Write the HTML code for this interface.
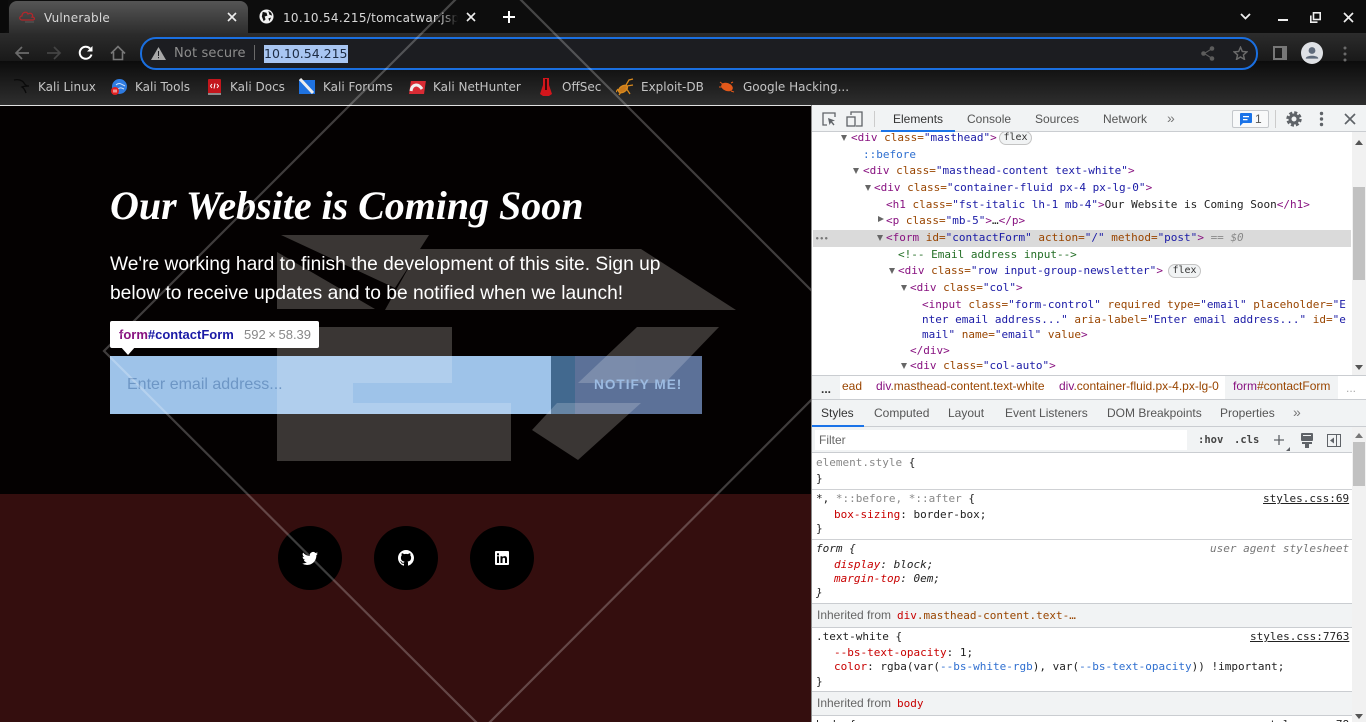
<!DOCTYPE html>
<html><head><meta charset="utf-8"><title>Vulnerable</title>
<style>
*{box-sizing:border-box}
html,body{margin:0;padding:0;width:1366px;height:722px;overflow:hidden;background:#000}
body{position:relative;font-family:"Liberation Sans",sans-serif}
.a{position:absolute;white-space:nowrap}
.c{font-family:"DejaVu Sans",sans-serif;font-size:12px;color:#c4c4c4;line-height:16px}
.m{position:absolute;white-space:pre;font-family:"DejaVu Sans Mono",monospace;font-size:11px;line-height:14px;color:#222;margin-top:1px}
.t{color:#881280}.n{color:#994500}.v{color:#1a1aa6}.g{color:#236e25}
.r{color:#c80000}.q{color:#888}.b{color:#2f6fd0}
.u{position:absolute;white-space:nowrap;font-size:12px;line-height:14px;color:#555}
.arr{position:absolute;width:0;height:0;border-left:3.5px solid transparent;border-right:3.5px solid transparent;border-top:6px solid #666}
.arrr{position:absolute;width:0;height:0;border-top:3.5px solid transparent;border-bottom:3.5px solid transparent;border-left:6px solid #666}
.hl{position:absolute;left:812px;width:540px;height:1px;background:#cfd1d4}
.bm{position:absolute;top:79px}
.soc{position:absolute;top:526px;width:64px;height:64px;border-radius:50%;background:#000}
</style></head><body>

<!-- page -->
<div class="a" style="left:0;top:106px;width:811px;height:388px;background:#040101"></div>
<div class="a" style="left:0;top:494px;width:811px;height:228px;background:#340e0e"></div>

<svg class="a" style="left:0;top:0" width="811" height="722" viewBox="0 0 811 722">
 <defs><clipPath id="f"><rect x="110" y="356" width="592" height="58"/></clipPath></defs>
 <g fill="#3a3634">
  <polygon points="281,235 429,235 395,288"/>
  <polygon points="277,252 375,309 277,309"/>
  <polygon points="419,249 641,249 736,310 385,310"/>
  <polygon points="277,327 452,327 452,383 353,383 353,403 511,403 511,461 277,461"/>
  <polygon points="637,327 719,327 665,383 578,383"/>
  <polygon points="557,403 641,403 578,460 532,430"/>
 </g>
 <rect x="110" y="356" width="441" height="58" fill="#9ec3e9"/>
 <rect x="551" y="356" width="24" height="58" fill="#42698f"/>
 <rect x="575" y="356" width="127" height="58" fill="#5c7198"/>
 <g fill="#fff" opacity=".19" clip-path="url(#f)">
  <polygon points="277,327 452,327 452,383 353,383 353,403 511,403 511,461 277,461"/>
  <polygon points="637,327 719,327 665,383 578,383"/>
  <polygon points="557,403 641,403 578,460 532,430"/>
 </g>
</svg>

<div class="a" style="left:110px;top:183px;font:italic bold 40px/46px 'Liberation Serif',serif;color:#fff;letter-spacing:-.03px">Our Website is Coming Soon</div>
<div class="a" style="left:110px;top:250px;font-size:19.2px;line-height:29px;color:#fff">We're working hard to finish the development of this site. Sign up<br>below to receive updates and to be notified when we launch!</div>

<div class="a" style="left:110px;top:321px;width:209px;height:27px;background:#fff;border-radius:2px"></div>
<div class="a" style="left:120px;top:346px;width:0;height:0;border-left:8px solid transparent;border-right:8px solid transparent;border-top:9px solid #fff"></div>
<div class="a" style="left:119px;top:327px;font-size:13px;line-height:15px;font-weight:bold"><span style="color:#881280">form</span><span style="color:#1a1aa6">#contactForm</span></div>
<div class="a" style="left:244px;top:327px;font-size:13px;line-height:15px;color:#888">592&#8201;×&#8201;58.39</div>

<div class="a" style="left:127px;top:375px;font-size:16px;line-height:19px;color:#6d96c5">Enter email address...</div>
<div class="a" style="left:594px;top:377px;font-size:13.6px;line-height:16px;font-weight:bold;letter-spacing:1px;color:#9cbbe2">NOTIFY ME!</div>

<div class="soc" style="left:278px"></div>
<div class="soc" style="left:374px"></div>
<div class="soc" style="left:470px"></div>

<!-- chrome -->
<div class="a" style="left:0;top:0;width:1366px;height:33px;background:#0d0d0d"></div>
<div class="a" style="left:0;top:33px;width:1366px;height:28px;background:linear-gradient(#2c2c2c,#191919)"></div>
<div class="a" style="left:0;top:61px;width:1366px;height:44px;background:linear-gradient(#0c0c0c,#2e2e2e)"></div>
<div class="a" style="left:0;top:105px;width:811px;height:1px;background:#e0e0e0"></div>
<div class="a" style="left:9px;top:1px;width:239px;height:33px;border-radius:8px 8px 0 0;background:linear-gradient(#555,#2c2c2c)"></div>
<div class="a" style="left:0;top:0;width:8px;height:33px;background:#0a0a0a;border-radius:0 0 6px 0"></div>

<svg class="a" style="left:17px;top:8px" width="22" height="18" viewBox="0 0 22 18" fill="none" stroke="#b3262b" stroke-width="1.2"><path d="M5 12C2 12 2 8 5 8 5 4 10 3 11 6 14 4 17 7 15 9 18 9 18 12 16 12Z"/><path d="M8 14h9" stroke="#555"/></svg>
<div class="a c" style="left:44px;top:10px;color:#d8d8d8;letter-spacing:.2px">Vulnerable</div>
<svg class="a" style="left:227px;top:12px" width="10" height="10" stroke="#eee" stroke-width="1.6"><path d="M1 1l8 8M9 1l-8 8"/></svg>
<svg class="a" style="left:259px;top:9px" width="15" height="15" viewBox="0 0 16 16"><circle cx="8" cy="8" r="7.5" fill="#f2f2f2"/><path d="M4 3l4 1 1 3-3 1 1 3-2 2-2-5zM10 2l3 2 1 3-3-1zM10 10l3-1-2 4z" fill="#111"/></svg>
<div class="a c" style="left:283px;top:10px;width:175px;overflow:hidden;color:#d8d8d8;letter-spacing:.3px;-webkit-mask-image:linear-gradient(90deg,#000 90%,transparent)">10.10.54.215/tomcatwar.jsp?page</div>
<svg class="a" style="left:466px;top:12px" width="10" height="10" stroke="#eee" stroke-width="1.6"><path d="M1 1l8 8M9 1l-8 8"/></svg>
<svg class="a" style="left:503px;top:11px" width="12" height="12" stroke="#fff" stroke-width="2"><path d="M6 0v12M0 6h12"/></svg>

<svg class="a" style="left:14px;top:45px" width="16" height="16" viewBox="0 0 16 16" fill="none" stroke="#6b6b6b" stroke-width="1.7"><path d="M15 8H2M8 2L2 8l6 6"/></svg>
<svg class="a" style="left:46px;top:45px" width="16" height="16" viewBox="0 0 16 16" fill="none" stroke="#444" stroke-width="1.7"><path d="M1 8h13M8 2l6 6-6 6"/></svg>
<svg class="a" style="left:78px;top:45px" width="16" height="16" viewBox="0 0 16 16" fill="none" stroke="#fff" stroke-width="2"><path d="M13.500 9.500A6 6 0 1 1 12 3.500"/><path d="M14.500 1v5.500H9" fill="#fff" stroke="none"/></svg>
<svg class="a" style="left:110px;top:45px" width="16" height="16" viewBox="0 0 16 16" fill="none" stroke="#777" stroke-width="1.600"><path d="M1 8.500L8 1.500l7 7M3.500 7v7.500h9V7"/></svg>

<div class="a" style="left:140px;top:37px;width:1118px;height:33px;border:2px solid #1a6fe0;border-radius:16px;background:#1c1d21"></div>
<svg class="a" style="left:151px;top:47px" width="15" height="13" viewBox="0 0 15 13"><path d="M7.500 0L15 13H0z" fill="#a8a8a8"/><path d="M7 4h1v5H7zM7 10h1v1.300H7z" fill="#1c1d21"/></svg>
<div class="a c" style="left:174px;top:46px;font-size:13px;color:#8d8d8d;letter-spacing:.15px">Not secure</div>
<div class="a" style="left:254px;top:45px;width:1px;height:15px;background:#6a6a6a"></div>
<div class="a c" style="left:264px;top:45px;height:18px;line-height:18px;font-size:12.500px;color:#1d2c44;background:#a9c6f2;width:84px">10.10.54.215</div>
<svg class="a" style="left:1201px;top:46px" width="14" height="15" viewBox="0 0 14 15" fill="#5c5c5c"><circle cx="11" cy="2.500" r="2.300"/><circle cx="11" cy="12.500" r="2.300"/><circle cx="2.500" cy="7.500" r="2.300"/><path d="M3 7l8-5 .5 1-8 5zM3 8l8 5 .5-1-8-5z"/></svg>
<svg class="a" style="left:1233px;top:46px" width="15" height="14" viewBox="0 0 24 23" fill="none" stroke="#6a6a6a" stroke-width="2.400"><path d="M12 2l3 7 7.500.7-5.700 5 1.700 7.300L12 18l-6.500 4 1.700-7.300-5.700-5L9 9z"/></svg>
<svg class="a" style="left:1273px;top:46px" width="14" height="14" fill="none"><rect x="1" y="1" width="12" height="12" stroke="#777" stroke-width="2"/><rect x="9" y="1" width="4" height="12" fill="#777"/></svg>
<div class="a" style="left:1301px;top:42px;width:22px;height:22px;border-radius:50%;background:#dfe1e5"></div>
<svg class="a" style="left:1301px;top:42px" width="22" height="22" viewBox="0 0 22 22" fill="#5f6a7a"><circle cx="11" cy="8.500" r="3.400"/><path d="M4.800 16c1-3 11.400-3 12.400 0v.6H4.800z"/></svg>
<svg class="a" style="left:1342px;top:46px" width="6" height="16" fill="#6b6b6b"><circle cx="3" cy="2" r="1.500"/><circle cx="3" cy="8" r="1.500"/><circle cx="3" cy="14" r="1.500"/></svg>

<svg class="a" style="left:1240px;top:13px" width="11" height="8" fill="none" stroke="#eee" stroke-width="1.800"><path d="M1 1l4.500 4.500L10 1"/></svg>
<div class="a" style="left:1278px;top:19px;width:10px;height:2px;background:#eee"></div>
<svg class="a" style="left:1310px;top:12px" width="11" height="11" fill="none" stroke="#eee" stroke-width="1.600"><rect x="3.500" y=".800" width="6.700" height="6.700"/><path d="M.800 3.500v6.700h6.700"/></svg>
<svg class="a" style="left:1343px;top:12px" width="11" height="11" stroke="#eee" stroke-width="1.700"><path d="M1 1l9 9M10 1l-9 9"/></svg>

<!-- bookmarks -->
<svg class="bm" style="left:13px;top:78px" width="18" height="17" viewBox="0 0 18 17" fill="none" stroke="#0a0a0a" stroke-width="1.300"><path d="M1 2c4-1 8 0 10 3 1 2 3 3 5 3-3 0-5 0-7 1 2 1 3 3 4 6"/></svg>
<div class="a c" style="left:38px;top:79px">Kali Linux</div>
<svg class="bm" style="left:111px" width="16" height="17" viewBox="0 0 16 17"><circle cx="8.500" cy="7.500" r="7.500" fill="#2e7be0"/><path d="M5 6c3-3 5-1 9 1M7 10c2-2 4-1 6 0" stroke="#cfe0f8" fill="none"/><circle cx="4" cy="12" r="4" fill="#e02020"/><rect x="2.500" y="10.500" width="1" height="3" fill="#fff"/><rect x="4.500" y="10.500" width="1" height="3" fill="#fff"/></svg>
<div class="a c" style="left:135px;top:79px">Kali Tools</div>
<svg class="bm" style="left:208px" width="13" height="16" viewBox="0 0 13 16"><rect width="13" height="15" rx="1" fill="#c3161c"/><rect y="14" width="13" height="2" fill="#8b8b8b"/><path d="M4 5L2.500 7 4 9M9 5l1.500 2L9 9M7 4.500L6 9.500" stroke="#fff" fill="none"/></svg>
<div class="a c" style="left:230px;top:79px">Kali Docs</div>
<svg class="bm" style="left:299px;top:78px" width="17" height="17" viewBox="0 0 17 17"><rect y="2" width="16" height="14" fill="#1f72e0"/><path d="M1 1l13 14" stroke="#eee" stroke-width="3"/></svg>
<div class="a c" style="left:323px;top:79px">Kali Forums</div>
<svg class="bm" style="left:409px;top:80px" width="17" height="15" viewBox="0 0 17 15"><rect x="2" y="1" width="15" height="13" fill="#d92b34" transform="skewX(-8)"/><path d="M2 11C3 4 9 3 13 9" stroke="#eee" stroke-width="3" fill="none"/></svg>
<div class="a c" style="left:433px;top:79px">Kali NetHunter</div>
<svg class="bm" style="left:538px;top:78px" width="16" height="18" viewBox="0 0 16 18"><path d="M5 0h6v7l3 9-3 2H5l-3-2 3-9z" fill="#d3161c"/><path d="M7 1h2v11H7z" fill="#3a0a0a"/></svg>
<div class="a c" style="left:562px;top:79px">OffSec</div>
<svg class="bm" style="left:616px;top:78px" width="18" height="18" viewBox="0 0 18 18" fill="none" stroke="#d98a1e" stroke-width="1.300"><ellipse cx="7" cy="11" rx="5" ry="3" fill="#c9791a" transform="rotate(-35 7 11)"/><path d="M10 7l3-5 4-1M11 8l6-1M10 10l4 6M5 14l-2 3M2 11L0 14"/></svg>
<div class="a c" style="left:641px;top:79px">Exploit-DB</div>
<svg class="bm" style="left:719px;top:80px" width="16" height="14" viewBox="0 0 16 14" fill="#e2581a"><ellipse cx="8" cy="7" rx="6" ry="4" transform="rotate(20 8 7)"/><path d="M1 2l4 3M0 7h3M12 11l3 1M12 3l2-1" stroke="#e2581a" fill="none"/></svg>
<div class="a c" style="left:743px;top:79px">Google Hacking...</div>

<!-- devtools -->
<div class="a" style="left:811px;top:105px;width:555px;height:617px;background:#fff;border-left:1px solid #8a8a8a"></div>

<!-- elements tree -->
<div class="a" style="left:813px;top:230px;width:538px;height:17px;background:#dadada"></div>
<div class="a" style="left:815px;top:233px;font:bold 7px/12px 'DejaVu Sans',sans-serif;color:#777">•••</div>
<div class="arr" style="left:841px;top:135px"></div>
<div class="m" style="left:851px;top:130px"><span class="t">&lt;div</span> <span class="n">class=</span><span class="v">"masthead"</span><span class="t">&gt;</span></div>
<div class="a" style="left:999px;top:131px;width:33px;height:14px;border:1px solid #c4c4c4;border-radius:8px;background:#f1f3f4;font:10px/12px 'DejaVu Sans Mono',monospace;color:#333;text-align:center">flex</div>
<div class="a" style="left:812px;top:105px;width:554px;height:27px;background:#f1f3f4;border-bottom:1px solid #cacdd1"></div>
<svg class="a" style="left:821px;top:111px" width="16" height="16" viewBox="0 0 16 16" fill="none" stroke="#5f6368" stroke-width="1.300"><path d="M6 14H2V2h12v4"/><path d="M7 7l7 2.500-3 1 2.500 3-1 1-2.500-3-1.500 2.500z" fill="#5f6368" stroke="none"/></svg>
<svg class="a" style="left:846px;top:111px" width="17" height="16" viewBox="0 0 17 16" fill="none" stroke="#5f6368" stroke-width="1.300"><path d="M5 4V1h11v14h-6"/><rect x="1" y="6" width="8" height="9"/></svg>
<div class="a" style="left:874px;top:111px;width:1px;height:16px;background:#ccc"></div>
<div class="a" style="left:881px;top:130px;width:74px;height:2px;background:#1a73e8"></div>
<div class="u" style="left:893px;top:112px;color:#333">Elements</div>
<div class="u" style="left:967px;top:112px">Console</div>
<div class="u" style="left:1035px;top:112px">Sources</div>
<div class="u" style="left:1103px;top:112px">Network</div>
<div class="u" style="left:1167px;top:111px;font-size:14px;color:#777">»</div>
<div class="a" style="left:1232px;top:110px;width:37px;height:18px;border:1px solid #c4c7cb;border-radius:2px;background:#f8f9fa"></div>
<svg class="a" style="left:1240px;top:113px" width="12" height="13" viewBox="0 0 12 13"><path d="M1 0h10a1 1 0 0 1 1 1v8a1 1 0 0 1-1 1H3l-3 3V1a1 1 0 0 1 1-1z" fill="#1a73e8"/><path d="M3 3h6v1.200H3zM3 6h4.500v1.200H3z" fill="#fff"/></svg>
<div class="u" style="left:1255px;top:112px;color:#555">1</div>
<div class="a" style="left:1275px;top:110px;width:1px;height:18px;background:#ccc"></div>
<svg class="a" style="left:1286px;top:111px" width="16" height="16" viewBox="0 0 16 16" fill="none"><circle cx="8" cy="8" r="4" stroke="#5f6368" stroke-width="3"/><circle cx="8" cy="8" r="6.300" stroke="#5f6368" stroke-width="2.800" stroke-dasharray="3 1.950"/></svg>
<svg class="a" style="left:1319px;top:111px" width="5" height="16" fill="#5f6368"><circle cx="2.500" cy="2.500" r="1.700"/><circle cx="2.500" cy="8" r="1.700"/><circle cx="2.500" cy="13.500" r="1.700"/></svg>
<svg class="a" style="left:1344px;top:113px" width="12" height="12" stroke="#5f6368" stroke-width="1.700"><path d="M1 1l10 10M11 1L1 11"/></svg>

<div class="m b" style="left:863px;top:147px">::before</div>
<div class="arr" style="left:853px;top:168px"></div>
<div class="m" style="left:863px;top:163px"><span class="t">&lt;div</span> <span class="n">class=</span><span class="v">"masthead-content text-white"</span><span class="t">&gt;</span></div>
<div class="arr" style="left:865px;top:185px"></div>
<div class="m" style="left:874px;top:180px"><span class="t">&lt;div</span> <span class="n">class=</span><span class="v">"container-fluid px-4 px-lg-0"</span><span class="t">&gt;</span></div>
<div class="m" style="left:886px;top:197px"><span class="t">&lt;h1</span> <span class="n">class=</span><span class="v">"fst-italic lh-1 mb-4"</span><span class="t">&gt;</span>Our Website is Coming Soon<span class="t">&lt;/h1&gt;</span></div>
<div class="arrr" style="left:878px;top:216px"></div>
<div class="m" style="left:886px;top:213px"><span class="t">&lt;p</span> <span class="n">class=</span><span class="v">"mb-5"</span><span class="t">&gt;</span>…<span class="t">&lt;/p&gt;</span></div>
<div class="arr" style="left:877px;top:235px"></div>
<div class="m" style="left:886px;top:230px"><span class="t">&lt;form</span> <span class="n">id=</span><span class="v">"contactForm"</span> <span class="n">action=</span><span class="v">"/"</span> <span class="n">method=</span><span class="v">"post"</span><span class="t">&gt;</span> <span class="q">== <i>$0</i></span></div>
<div class="m g" style="left:898px;top:247px">&lt;!-- Email address input--&gt;</div>
<div class="arr" style="left:889px;top:268px"></div>
<div class="m" style="left:898px;top:263px"><span class="t">&lt;div</span> <span class="n">class=</span><span class="v">"row input-group-newsletter"</span><span class="t">&gt;</span></div>
<div class="a" style="left:1168px;top:264px;width:33px;height:14px;border:1px solid #c4c4c4;border-radius:8px;background:#f1f3f4;font:10px/12px 'DejaVu Sans Mono',monospace;color:#333;text-align:center">flex</div>
<div class="arr" style="left:901px;top:285px"></div>
<div class="m" style="left:910px;top:280px"><span class="t">&lt;div</span> <span class="n">class=</span><span class="v">"col"</span><span class="t">&gt;</span></div>
<div class="m" style="left:922px;top:297px"><span class="t">&lt;input</span> <span class="n">class=</span><span class="v">"form-control"</span> <span class="n">required</span> <span class="n">type=</span><span class="v">"email"</span> <span class="n">placeholder=</span><span class="v">"E</span></div>
<div class="m" style="left:922px;top:312px"><span class="v">nter email address..."</span> <span class="n">aria-label=</span><span class="v">"Enter email address..."</span> <span class="n">id=</span><span class="v">"e</span></div>
<div class="m" style="left:922px;top:327px"><span class="v">mail"</span> <span class="n">name=</span><span class="v">"email"</span> <span class="n">value</span><span class="t">&gt;</span></div>
<div class="m t" style="left:910px;top:343px">&lt;/div&gt;</div>
<div class="arr" style="left:901px;top:363px"></div>
<div class="m" style="left:910px;top:358px"><span class="t">&lt;div</span> <span class="n">class=</span><span class="v">"col-auto"</span><span class="t">&gt;</span></div>

<!-- scrollbar elements -->
<div class="a" style="left:1352px;top:132px;width:14px;height:244px;background:#f1f1f1"></div>
<div class="a" style="left:1353px;top:187px;width:12px;height:93px;background:#c1c1c1"></div>
<div class="a" style="left:1355px;top:140px;width:0;height:0;border-left:4px solid transparent;border-right:4px solid transparent;border-bottom:5px solid #555"></div>
<div class="a" style="left:1355px;top:365px;width:0;height:0;border-left:4px solid transparent;border-right:4px solid transparent;border-top:5px solid #555"></div>

<!-- breadcrumbs -->
<div class="a" style="left:812px;top:375px;width:554px;height:25px;background:#fff;border-top:1px solid #cacdd1;border-bottom:1px solid #cacdd1"></div>
<div class="a" style="left:812px;top:376px;width:28px;height:23px;background:#f1f3f4"></div>
<div class="a" style="left:1225px;top:376px;width:113px;height:23px;background:#f1f3f4"></div>
<div class="u" style="left:821px;top:382px;color:#333;font-weight:bold">...</div>
<div class="u" style="left:842px;top:379px;color:#994500">ead</div>
<div class="u" style="left:876px;top:379px"><span class="t">div</span><span style="color:#994500">.masthead-content.text-white</span></div>
<div class="u" style="left:1059px;top:379px"><span class="t">div</span><span style="color:#994500">.container-fluid.px-4.px-lg-0</span></div>
<div class="u" style="left:1233px;top:379px"><span class="t">form</span><span style="color:#994500">#contactForm</span></div>
<div class="u" style="left:1346px;top:381px;color:#aaa">...</div>

<!-- styles tabs -->
<div class="a" style="left:812px;top:400px;width:554px;height:27px;background:#f1f3f4;border-bottom:1px solid #cacdd1"></div>
<div class="a" style="left:812px;top:425px;width:52px;height:2px;background:#1a73e8"></div>
<div class="u" style="left:821px;top:406px;color:#333">Styles</div>
<div class="u" style="left:874px;top:406px">Computed</div>
<div class="u" style="left:948px;top:406px">Layout</div>
<div class="u" style="left:1005px;top:406px">Event Listeners</div>
<div class="u" style="left:1107px;top:406px">DOM Breakpoints</div>
<div class="u" style="left:1220px;top:406px">Properties</div>
<div class="u" style="left:1293px;top:405px;font-size:14px;color:#777">»</div>

<!-- filter -->
<div class="a" style="left:812px;top:427px;width:540px;height:26px;background:#f1f3f4;border-bottom:1px solid #cacdd1"></div>
<div class="a" style="left:815px;top:430px;width:372px;height:20px;background:#fff"></div>
<div class="u" style="left:819px;top:433px;color:#666">Filter</div>
<div class="m" style="left:1198px;top:432px;font-weight:bold;font-size:10.500px;color:#444">:hov</div>
<div class="m" style="left:1234px;top:432px;font-weight:bold;font-size:10.500px;color:#444">.cls</div>
<svg class="a" style="left:1273px;top:434px" width="18" height="18" stroke="#5f6368" stroke-width="1.300"><path d="M6 1v10M1 6h10"/><path d="M17 13v4h-4z" fill="#5f6368" stroke="none"/></svg>
<svg class="a" style="left:1301px;top:433px" width="12" height="16" viewBox="0 0 12 16" fill="#5f6368"><rect width="12" height="8" rx="1"/><rect x="1" y="9" width="10" height="2"/><rect x="4" y="11" width="4" height="4"/><rect x="2" y="2" width="8" height="1" fill="#f1f3f4"/></svg>
<svg class="a" style="left:1327px;top:434px" width="14" height="13" fill="none" stroke="#5f6368"><rect x=".5" y=".5" width="13" height="12"/><path d="M9.500 1v11"/><path d="M7 3.500v6L3 6.500z" fill="#5f6368" stroke="none"/></svg>

<!-- styles -->
<div class="m q" style="left:816px;top:455px">element.style <span style="color:#222">{</span></div>
<div class="m" style="left:816px;top:471px">}</div>
<div class="hl" style="top:489px"></div>
<div class="m" style="left:816px;top:491px">*, <span class="q">*::before, *::after</span> {</div>
<div class="m" style="left:1263px;top:491px;text-decoration:underline">styles.css:69</div>
<div class="m" style="left:834px;top:507px"><span class="r">box-sizing</span>: border-box;</div>
<div class="m" style="left:816px;top:521px">}</div>
<div class="hl" style="top:539px"></div>
<div class="m" style="left:816px;top:541px;font-style:italic">form {</div>
<div class="m q" style="left:1210px;top:541px;font-style:italic;color:#777">user agent stylesheet</div>
<div class="m" style="left:834px;top:557px;font-style:italic"><span class="r">display</span>: block;</div>
<div class="m" style="left:834px;top:571px;font-style:italic"><span class="r">margin-top</span>: 0em;</div>
<div class="m" style="left:816px;top:585px;font-style:italic">}</div>
<div class="a" style="left:812px;top:603px;width:540px;height:25px;background:#f1f3f4;border-top:1px solid #cacdd1;border-bottom:1px solid #cacdd1"></div>
<div class="u" style="left:817px;top:608px;color:#666">Inherited from</div>
<div class="m" style="left:897px;top:608px"><span class="r">div</span><span style="color:#994500">.masthead-content.text-…</span></div>
<div class="m" style="left:816px;top:629px">.text-white {</div>
<div class="m" style="left:1250px;top:629px;text-decoration:underline">styles.css:7763</div>
<div class="m" style="left:834px;top:645px"><span class="r">--bs-text-opacity</span>: 1;</div>
<div class="m" style="left:834px;top:659px"><span class="r">color</span>: rgba(var(<span class="b">--bs-white-rgb</span>), var(<span class="b">--bs-text-opacity</span>)) !important;</div>
<div class="m" style="left:816px;top:674px">}</div>
<div class="a" style="left:812px;top:691px;width:540px;height:25px;background:#f1f3f4;border-top:1px solid #cacdd1;border-bottom:1px solid #cacdd1"></div>
<div class="u" style="left:817px;top:696px;color:#666">Inherited from</div>
<div class="m r" style="left:897px;top:696px">body</div>
<div class="m" style="left:816px;top:717px">body {</div>
<div class="m" style="left:1263px;top:717px;text-decoration:underline">styles.css:78</div>

<div class="a" style="left:1352px;top:427px;width:14px;height:295px;background:#f1f1f1"></div>
<div class="a" style="left:1353px;top:442px;width:12px;height:44px;background:#c1c1c1"></div>
<div class="a" style="left:1355px;top:433px;width:0;height:0;border-left:4px solid transparent;border-right:4px solid transparent;border-bottom:5px solid #777"></div>
<div class="a" style="left:1355px;top:714px;width:0;height:0;border-left:4px solid transparent;border-right:4px solid transparent;border-top:5px solid #555"></div>

<!-- social icons -->
<svg class="a" style="left:302px;top:550px" width="16" height="16" viewBox="0 0 16 16" fill="#fff"><path d="M5.026 15c6.038 0 9.341-5.003 9.341-9.334 0-.14 0-.282-.006-.422A6.685 6.685 0 0 0 16 3.542a6.658 6.658 0 0 1-1.889.518 3.301 3.301 0 0 0 1.447-1.817 6.533 6.533 0 0 1-2.087.793A3.286 3.286 0 0 0 7.875 6.03a9.325 9.325 0 0 1-6.767-3.429 3.289 3.289 0 0 0 1.018 4.382A3.323 3.323 0 0 1 .64 6.575v.045a3.288 3.288 0 0 0 2.632 3.218 3.203 3.203 0 0 1-.865.115 3.23 3.23 0 0 1-.614-.057 3.283 3.283 0 0 0 3.067 2.277A6.588 6.588 0 0 1 .78 13.58a6.32 6.32 0 0 1-.78-.045A9.344 9.344 0 0 0 5.026 15z"/></svg>
<svg class="a" style="left:398px;top:550px" width="16" height="16" viewBox="0 0 16 16" fill="#fff"><path d="M8 0C3.580 0 0 3.580 0 8c0 3.540 2.290 6.530 5.470 7.590.4.070.550-.170.550-.380 0-.190-.010-.820-.010-1.490-2.010.370-2.530-.490-2.690-.940-.090-.230-.480-.940-.820-1.130-.280-.150-.680-.520-.010-.530.630-.010 1.080.580 1.230.820.720 1.210 1.870.870 2.330.660.070-.520.280-.870.510-1.070-1.780-.2-3.640-.890-3.640-3.950 0-.870.310-1.590.820-2.150-.080-.2-.360-1.020.080-2.120 0 0 .670-.210 2.200.820.640-.180 1.320-.270 2-.270.680 0 1.360.090 2 .270 1.530-1.040 2.200-.820 2.200-.820.440 1.100.160 1.920.080 2.120.510.560.820 1.270.820 2.150 0 3.070-1.870 3.750-3.650 3.950.290.250.540.730.540 1.480 0 1.070-.010 1.930-.010 2.200 0 .210.150.460.550.380A8.013 8.013 0 0 0 16 8c0-4.420-3.580-8-8-8z"/></svg>
<svg class="a" style="left:495px;top:551px" width="14" height="14" viewBox="0 0 14 14"><rect width="14" height="14" rx="1" fill="#fff"/><rect x="2" y="5.300" width="2" height="6.700" fill="#000"/><rect x="2" y="2.300" width="2" height="2" fill="#000"/><path d="M5.500 5.300h2v1c.5-.8 1.300-1.200 2.200-1.200 1.700 0 2.300 1.100 2.300 2.800V12h-2V8.300c0-.9-.3-1.500-1.100-1.500-.9 0-1.400.6-1.400 1.600V12h-2z" fill="#000"/></svg>

<!-- wallpaper diamond lines -->
<svg class="a" style="left:0;top:0;pointer-events:none" width="811" height="722" viewBox="0 0 811 722">
 <polygon points="488,-33 866,345 483,729 104,351" fill="none" stroke="#fff" stroke-opacity=".24" stroke-width="2.200"/>
</svg>
</body></html>
